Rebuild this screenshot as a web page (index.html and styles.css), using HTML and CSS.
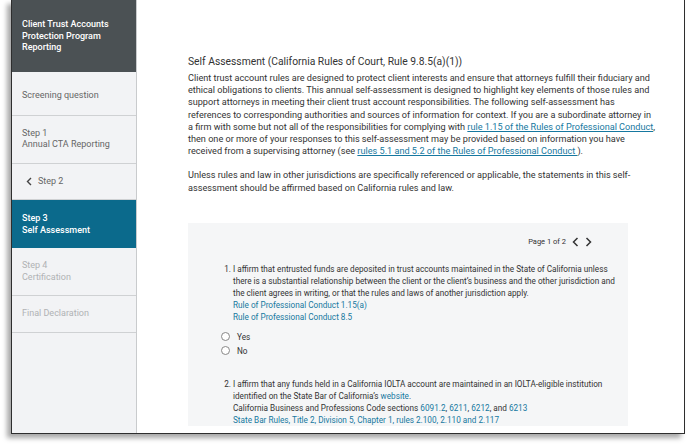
FILE: index.html
```html
<!DOCTYPE html>
<html>
<head>
<meta charset="utf-8">
<link rel="stylesheet" href="styles.css">
</head>
<body>
<div class="frame">
  <aside class="sidebar">
    <div class="brand">Client Trust Accounts<br>Protection Program<br>Reporting</div>
    <div class="nav-item screening">Screening question</div>
    <div class="nav-item">Step 1<br>Annual CTA Reporting</div>
    <div class="nav-item back"><svg class="chev" width="6" height="9" viewBox="0 0 6 9"><path d="M5 1 L1.5 4.5 L5 8" fill="none" stroke="#444" stroke-width="1.4"/></svg>Step 2</div>
    <div class="nav-item active">Step 3<br>Self Assessment</div>
    <div class="nav-item disabled">Step 4<br>Certification</div>
    <div class="nav-item disabled">Final Declaration</div>
  </aside>
  <main class="main">
    <h1 class="title">Self Assessment (California Rules of Court, Rule 9.8.5(a)(1))</h1>
    <p class="intro">Client trust account rules are designed to protect client interests and ensure that attorneys fulfill their fiduciary and ethical obligations to clients. This annual self-assessment is designed to highlight key elements of those rules and support attorneys in meeting their client trust account responsibilities. The following self-assessment has references to corresponding authorities and sources of information for context. If you are a subordinate attorney in a firm with some but not all of the responsibilities for complying with <a class="ulink">rule 1.15 of the Rules of Professional Conduct</a>, then one or more of your responses to this self-assessment may be provided based on information you have received from a supervising attorney (see <a class="ulink">rules 5.1 and 5.2 of the Rules of Professional Conduct </a>).</p>
    <p class="intro second">Unless rules and law in other jurisdictions are specifically referenced or applicable, the statements in this self-assessment should be affirmed based on California rules and law.</p>
    <section class="panel">
      <div class="pager">Page 1 of 2
        <svg class="pchev" width="7" height="10" viewBox="0 0 7 10"><path d="M5.5 1 L1.5 5 L5.5 9" fill="none" stroke="#333" stroke-width="1.5"/></svg>
        <svg class="pchev" width="7" height="10" viewBox="0 0 7 10"><path d="M1.5 1 L5.5 5 L1.5 9" fill="none" stroke="#333" stroke-width="1.5"/></svg>
      </div>
      <ol class="questions">
        <li class="q">
          <div class="q-text">I affirm that entrusted funds are deposited in trust accounts maintained in the State of California unless there is a substantial relationship between the client or the client’s business and the other jurisdiction and the client agrees in writing, or that the rules and laws of another jurisdiction apply.</div>
          <div class="ref">Rule of Professional Conduct 1.15(a)</div>
          <div class="ref">Rule of Professional Conduct 8.5</div>
          <div class="options">
            <label class="opt"><span class="radio"></span>Yes</label>
            <label class="opt"><span class="radio"></span>No</label>
          </div>
        </li>
        <li class="q">
          <div class="q-text">I affirm that any funds held in a California IOLTA account are maintained in an IOLTA-eligible institution identified on the State Bar of California’s <span class="link">website</span>.</div>
          <div class="q-text">California Business and Professions Code sections <span class="link">6091.2</span>, <span class="link">6211</span>, <span class="link">6212</span>, and <span class="link">6213</span></div>
          <div class="ref">State Bar Rules, Title 2, Division 5, Chapter 1, rules 2.100, 2.110 and 2.117</div>
        </li>
      </ol>
    </section>
  </main>
</div>
</body>
</html>
```

FILE: styles.css
```css
* { box-sizing: border-box; }
html, body { margin: 0; padding: 0; background: #fff; }
body { width: 688px; height: 445px; overflow: hidden; font-family: Roboto, "Liberation Sans", sans-serif; color: #333; }
.frame {
  margin-left: 11px;
  width: 674px;
  height: 434px;
  border: 1px solid #2e2e2e;
  border-top: none;
  display: flex;
  overflow: hidden;
  box-shadow: -4px 4px 5px rgba(0,0,0,0.35);
}
.sidebar {
  width: 125px;
  flex: none;
  background: #f2f3f5;
  border-right: 1px solid #c9cbcd;
  display: flex;
  flex-direction: column;
}
.brand {
  height: 72px;
  background: #4b5154;
  color: #fff;
  font-size: 9px;
  font-weight: 500;
  line-height: 11.5px;
  padding: 19px 10px 0;
}
.nav-item {
  font-size: 9px;
  line-height: 11.5px;
  color: #666;
  padding: 12px 10px;
  border-bottom: 1px solid #cfd1d3;
}
.nav-item.screening { padding: 18px 10px 13px; }
.nav-item.back { display: flex; align-items: center; gap: 6px; padding-left: 14px; }
.nav-item.active { background: #0b6a8c; color: #fff; font-weight: 500; border-bottom-color: #0b6a8c; padding-top: 13px; padding-bottom: 11px; }
.nav-item.disabled { color: #b0b2b4; }
.main {
  flex: 1;
  background: #fff;
  padding: 55px 0 0 51px;
}
.title {
  margin: 0 0 3px;
  font-size: 10.3px;
  line-height: 14px;
  font-weight: 400;
  color: #333;
}
.intro {
  margin: 0;
  width: 469.5px;
  font-size: 9.15px;
  line-height: 12.2px;
  color: #333;
}
.intro.second { margin-top: 12px; }
.ulink { color: #1678a0; text-decoration: underline; }
.panel {
  margin-top: 29px;
  width: 440px;
  background: #f5f6f7;
  padding: 14px 0 0 0;
}
.pager {
  display: flex;
  align-items: center;
  justify-content: flex-end;
  gap: 6px;
  height: 10px;
  font-size: 7.5px;
  color: #333;
  padding-right: 36px;
}
.pchev { display: block; }
.questions {
  margin: 16px 0 0;
  padding: 0 8px 0 45px;
  font-size: 8.2px;
  line-height: 12px;
}
.q { margin-bottom: 21px; }
.q::marker { color: #333; }
.ref, .link { color: #1678a0; }
.options { margin-top: 8px; display: flex; flex-direction: column; gap: 2px; margin-left: -12px; }
.opt { display: flex; align-items: center; gap: 7px; height: 12px; }
.radio { width: 9px; height: 9px; border: 1px solid #888; border-radius: 50%; background: #fff; }
```
